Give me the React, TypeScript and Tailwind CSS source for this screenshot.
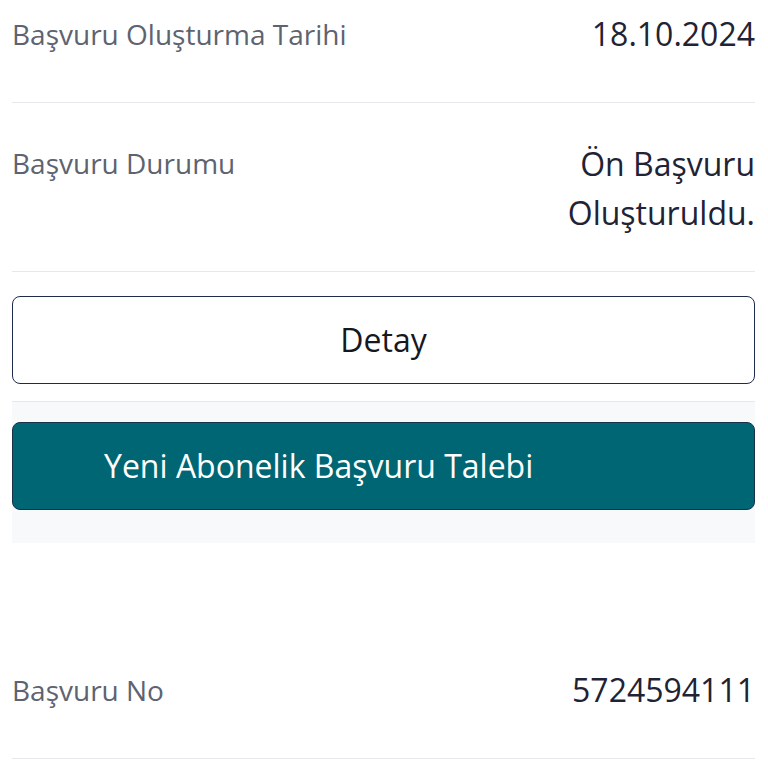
export default function App() {
  const font = { fontFamily: '"Open Sans", "Noto Sans", sans-serif' }
  return (
    <div className="min-h-screen bg-white px-[12px] pr-[13px]" style={font}>
      <div className="flex items-start justify-between border-b border-[#e6e8eb] pt-[10px] pb-[44px]">
        <span className="text-[28px] leading-[48px] text-[#5e6370]">Başvuru Oluşturma Tarihi</span>
        <span className="text-[32px] leading-[48px] text-[#1f2335]">18.10.2024</span>
      </div>
      <div className="flex items-start justify-between border-b border-[#e6e8eb] pt-[36px] pb-[34px]">
        <span className="text-[28px] leading-[48px] text-[#5e6370]">Başvuru Durumu</span>
        <span className="text-right text-[32px] leading-[49px] text-[#1f2335]">
          Ön Başvuru
          <br />
          Oluşturuldu.
        </span>
      </div>
      <div className="border-b border-[#e6e8eb] pt-[24px] pb-[17px]">
        <button className="flex h-[88px] w-full items-center justify-center rounded-[8px] border border-[#1e2b4d] bg-white text-[32px] text-[#15181f]">
          Detay
        </button>
      </div>
      <div className="bg-[#f8f9fa] pt-[20px] pb-[33px]">
        <button className="flex h-[88px] w-full items-center rounded-[8px] border border-[#17324a] bg-[#006673] pl-[91px] text-[32px] text-white">
          Yeni Abonelik Başvuru Talebi
        </button>
      </div>
      <div className="mt-[123px] flex items-start justify-between border-b border-[#e6e8eb] pb-[44px]">
        <span className="text-[28px] leading-[48px] text-[#5e6370]">Başvuru No</span>
        <span className="text-[32px] leading-[48px] text-[#1f2335]">5724594111</span>
      </div>
    </div>
  )
}
